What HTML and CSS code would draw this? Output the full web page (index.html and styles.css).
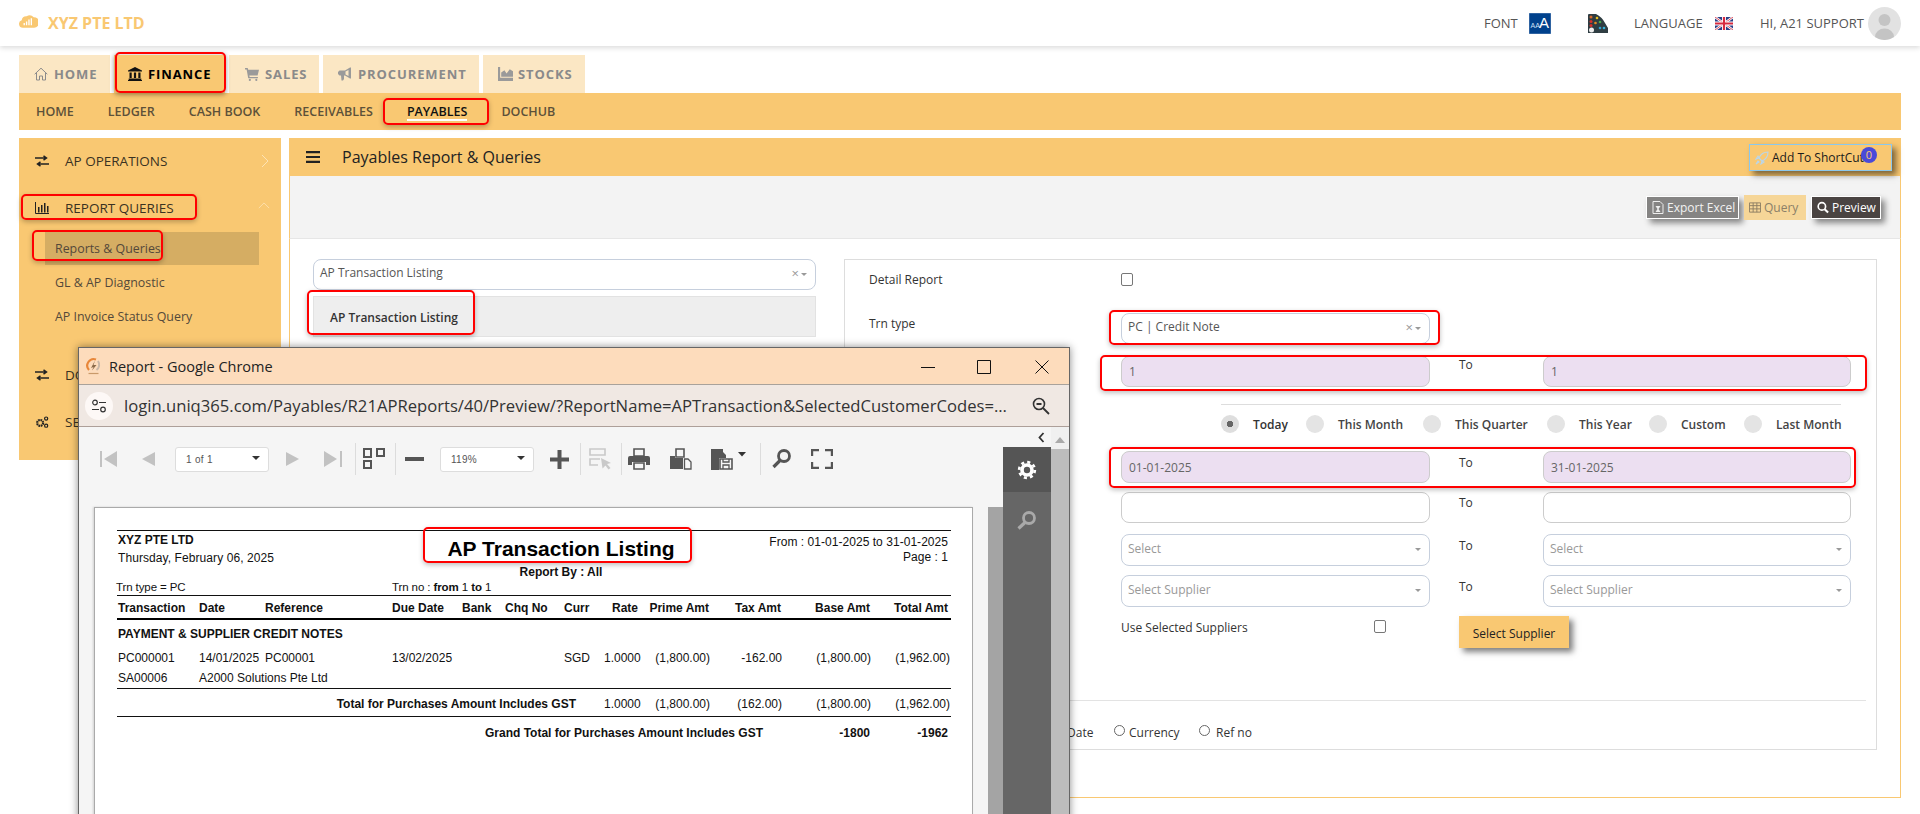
FILE: index.html
```html
<!DOCTYPE html>
<html lang="en">
<head>
<meta charset="utf-8">
<title>Payables Report &amp; Queries</title>
<link rel="stylesheet" href="styles.css">
</head>
<body>
<div class="page">
  <header class="topbar">
    <div class="brand">
      <svg class="brand-logo" viewBox="0 0 20 15"><path d="M4 15a4 4 0 0 1-1.200-7.800A5 5 0 0 1 8 3a6 6 0 0 1 7.500 1 5.500 5.500 0 0 1 .5 11z" fill="#f9c872"/><path d="M5.500 12.500V10M8 12.500V8.500M10.500 12.500V6.500M13 12.500V5" stroke="#fff" stroke-width="1.400"/></svg>
      <span>XYZ PTE LTD</span>
    </div>
    <div class="top-right">
      <span class="top-font">FONT</span>
      <svg class="font-ico" viewBox="0 0 22 21"><rect width="22" height="21" fill="#00418c" stroke="#9db6d4" stroke-width=".6"/><text x="1.500" y="15" font-size="7" fill="#cfe0f5" font-family="Liberation Sans">AA</text><text x="10" y="15" font-size="15" fill="#fff" font-family="Liberation Sans">A</text></svg>
      <svg class="palette-ico" viewBox="0 0 20 19"><path d="M0 1q0-1 1-1h7q6 3 9 9l3 5v5H0z" fill="#2f3d42"/><circle cx="3" cy="3" r="1.500" fill="#d8652a"/><circle cx="3" cy="7.500" r="1.500" fill="#d8302a"/><circle cx="3" cy="11.500" r="1.500" fill="#d8302a"/><circle cx="9" cy="4" r="1.300" fill="#e8c020"/><circle cx="12" cy="8" r="1.300" fill="#4aa84a"/><circle cx="7.500" cy="9" r="1.300" fill="#e88a20"/><circle cx="16" cy="14" r="1.300" fill="#35b0d8"/><circle cx="12" cy="14" r="1.300" fill="#2f9fd0"/><circle cx="3.500" cy="16" r="2.500" fill="#eee"/></svg>
      <span class="top-lang">LANGUAGE</span>
      <svg class="flag" viewBox="0 0 18 13"><rect width="18" height="13" rx="1" fill="#2a3f86"/><path d="M0 0l18 13M18 0L0 13" stroke="#fff" stroke-width="2.400"/><path d="M0 0l18 13M18 0L0 13" stroke="#d6293e" stroke-width=".8"/><path d="M9 0v13M0 6.500h18" stroke="#fff" stroke-width="4"/><path d="M9 0v13M0 6.500h18" stroke="#d6293e" stroke-width="2.200"/></svg>
      <span class="top-user">HI, A21 SUPPORT</span>
      <svg class="avatar" viewBox="0 0 33 33"><circle cx="16.500" cy="16.500" r="16.500" fill="#e2e2e2"/><circle cx="16.500" cy="13" r="6" fill="#c4c4c4"/><path d="M7 30a9.500 8.500 0 0 1 19 0 16.500 16.500 0 0 1-19 0z" fill="#c4c4c4"/></svg>
    </div>
  </header>

  <nav class="tabs">
    <div class="tab tab-home">
      <svg class="tab-ico" viewBox="0 0 14 14"><path d="M.7 7.200 7 1.200l6.300 6M2.500 6v7h3V9h3v4h3V6" fill="none" stroke="#8b8b8b" stroke-width="1"/></svg>HOME</div>
    <div class="tab tab-finance active">
      <svg class="tab-ico" viewBox="0 0 14 14"><path d="M7 0l7 3.500v1H0v-1zM1.500 5.500h2.200V11H1.500zM5.900 5.500h2.200V11H5.900zM10.300 5.500h2.200V11h-2.200zM.7 11.500h12.600V13H.7zM0 13h14v1H0z" fill="#111"/></svg>FINANCE</div>
    <div class="tab tab-sales">
      <svg class="tab-ico" viewBox="0 0 13 13"><path d="M0 1h2.500l.5 1.500H13l-1.300 5.500H4l.3 1.300h7.700V10.500H3L1.500 2.400H0z" fill="#9a9a9a"/><circle cx="4.500" cy="12" r="1" fill="#9a9a9a"/><circle cx="10.500" cy="12" r="1" fill="#9a9a9a"/></svg>SALES</div>
    <div class="tab tab-proc">
      <svg class="tab-ico wide" viewBox="0 0 15 13"><path d="M13 0v11h-1L7 8H6v3.500L5 13H3.500L3 8H1.500L0 6.500v-2L1.500 3H7l5-3z" fill="#9a9a9a"/><path d="M10.500 2.500 7.500 4v3l3 1.500z" fill="#fbe7c4"/></svg>PROCUREMENT</div>
    <div class="tab tab-stocks">
      <svg class="tab-ico wide" viewBox="0 0 14 13"><path d="M0 0h2v10h12v3H0zM3 9V5l3-2 2 3 3-4 3 2v5z" fill="#9a9a9a"/></svg>STOCKS</div>
  </nav>

  <nav class="subnav">
    <span>HOME</span><span>LEDGER</span><span>CASH BOOK</span><span>RECEIVABLES</span><span class="current">PAYABLES</span><span>DOCHUB</span>
  </nav>

  <div class="workspace">
    <aside class="sidebar">
      <div class="side-row"><svg class="side-ico" viewBox="0 0 14 12"><path d="M0 3h11M8.500 .8 11.500 3 8.500 5.200M14 9H3M5.500 6.800 2.500 9l3 2.200" fill="none" stroke="#222" stroke-width="1.500"/></svg><span>AP OPERATIONS</span><svg class="side-chev" viewBox="0 0 8 14"><path d="M1 1l6 6-6 6" fill="none" stroke="#fde3b4" stroke-width="1"/></svg></div>
      <div class="side-row"><svg class="side-ico" viewBox="0 0 14 12"><path d="M.5 0v11.500H14" fill="none" stroke="#222"/><path d="M3 5h1.500v5.500H3zM6 3h1.500v7.500H6zM9 1h1.500v9.500H9zM12 4h1.500v6.500H12z" fill="#222"/></svg><span>REPORT QUERIES</span><svg class="side-chev up" viewBox="0 0 14 8"><path d="M1 7l6-6 6 6" fill="none" stroke="#fde3b4" stroke-width="1"/></svg></div>
      <div class="side-sub selected">Reports &amp; Queries</div>
      <div class="side-sub">GL &amp; AP Diagnostic</div>
      <div class="side-sub tall">AP Invoice Status Query</div>
      <div class="side-row spaced"><svg class="side-ico" viewBox="0 0 14 12"><path d="M0 3h11M8.500 .8 11.500 3 8.500 5.200M14 9H3M5.500 6.800 2.500 9l3 2.200" fill="none" stroke="#222" stroke-width="1.500"/></svg><span class="cut">DO</span></div>
      <div class="side-row"><svg class="side-ico" viewBox="0 0 14 13"><circle cx="5" cy="7.500" r="3.200" fill="none" stroke="#222" stroke-width="2.400" stroke-dasharray="1.800 .7"/><circle cx="11.500" cy="2.800" r="1.700" fill="none" stroke="#222" stroke-width="1.300"/><circle cx="11.500" cy="10.500" r="1.700" fill="none" stroke="#222" stroke-width="1.300"/></svg><span class="cut">SE</span></div>
    </aside>

    <main class="panel">
      <div class="panel-head">
        <svg class="bars" viewBox="0 0 14 12"><path d="M0 0h14v2.200H0zM0 4.900h14v2.200H0zM0 9.800h14V12H0z" fill="#222"/></svg>
        <h1>Payables Report &amp; Queries</h1>
        <button class="shortcut"><svg class="rocket" viewBox="0 0 14 14"><path d="M13 1C9 1 5.500 3.500 4 7l3 3c3.500-1.500 6-5 6-9zM4 7 1 8l2-3zM7 10l-1 3 3-2zM3 10l-2 3 3-2z" fill="none" stroke="#b9d6ea" stroke-width="1.100"/></svg>Add To ShortCut<span class="badge">0</span></button>
      </div>
      <div class="panel-actions">
        <button class="act act-export"><svg class="act-ico" viewBox="0 0 11 13"><path d="M.5.5h7l3 3v9H.5z" fill="none" stroke="#eee"/><path d="M3 5h5L6 8l2 3H3l2-3z" fill="#eee"/></svg>Export Excel</button>
        <button class="act act-query"><svg class="act-ico" viewBox="0 0 13 11"><path d="M.5.500h12v10H.5zM.5 3.500h12M.5 7h12M4.500 .5v10M8.500 .5v10" fill="none" stroke="#8b7d63"/></svg>Query</button>
        <button class="act act-preview"><svg class="act-ico" viewBox="0 0 13 13"><circle cx="5.300" cy="5.300" r="4" fill="none" stroke="#fff" stroke-width="1.800"/><path d="M8.300 8.300 12 12" stroke="#fff" stroke-width="2.200"/></svg>Preview</button>
      </div>
      <div class="panel-body">
        <div class="report-pick">
          <div class="sel sel-report"><span>AP Transaction Listing</span><span class="sel-x">×</span><span class="caret"></span></div>
          <div class="pick-item">AP Transaction Listing</div>
        </div>
        <form class="filters">
          <div class="frow frow-detail"><label>Detail Report</label><span class="cb"></span></div>
          <div class="frow frow-trn"><label>Trn type</label><div class="sel"><span>PC | Credit Note</span><span class="sel-x">×</span><span class="caret"></span></div></div>
          <div class="frow frow-no"><label></label><div class="field lilac">1</div><label class="to">To</label><div class="field lilac">1</div></div>
          <div class="hr-short"></div>
          <div class="period">
            <span class="dot on"></span><b class="ptxt p-today">Today</b>
            <span class="dot"></span><span class="ptxt p-month">This Month</span>
            <span class="dot"></span><span class="ptxt p-quarter">This Quarter</span>
            <span class="dot"></span><span class="ptxt p-year">This Year</span>
            <span class="dot"></span><span class="ptxt p-custom">Custom</span>
            <span class="dot"></span><span class="ptxt p-last">Last Month</span>
          </div>
          <div class="frow frow-date"><label></label><div class="field lilac tall">01-01-2025</div><label class="to">To</label><div class="field lilac tall">31-01-2025</div></div>
          <div class="frow frow-blank"><label></label><div class="field"></div><label class="to">To</label><div class="field"></div></div>
          <div class="frow frow-sel"><label></label><div class="sel ph"><span>Select</span><span class="caret"></span></div><label class="to">To</label><div class="sel ph"><span>Select</span><span class="caret"></span></div></div>
          <div class="frow frow-sup"><label></label><div class="sel ph"><span>Select Supplier</span><span class="caret"></span></div><label class="to">To</label><div class="sel ph"><span>Select Supplier</span><span class="caret"></span></div></div>
          <div class="frow frow-use"><label></label><div class="use"><span>Use Selected Suppliers</span><span class="cb"></span></div><label class="to"></label><button type="button" class="pick-sup">Select Supplier</button></div>
          <div class="hr-full"></div>
          <div class="order">
            <span class="radio"></span><span class="o-date">Date</span>
            <span class="radio"></span><span class="o-curr">Currency</span>
            <span class="radio r-last"></span><span>Ref no</span>
          </div>
        </form>
      </div>
    </main>
  </div>

  <!-- popup report window -->
  <section class="win">
    <div class="win-title">
      <svg class="favicon" viewBox="0 0 19 19"><path d="M5 13A6.500 6.500 0 0 1 12 2.500" fill="none" stroke="#e8873a" stroke-width="2.200"/><path d="M14 4a6.500 6.500 0 0 1-1.500 9" fill="none" stroke="#c9b8a8" stroke-width="2"/><path d="M7 11 11 3.500 9.500 8h3L8 13.500 9.500 10z" fill="#8a6a4a"/><path d="M4.500 16.500h10" stroke="#c99a6a" stroke-width="1.200"/></svg>
      <span class="win-name">Report - Google Chrome</span>
      <svg class="wc wc-min" viewBox="0 0 14 14"><path d="M0 7.500h14" stroke="#111" stroke-width="1"/></svg>
      <svg class="wc wc-max" viewBox="0 0 14 14"><path d="M.5.500h13v13H.5z" fill="none" stroke="#111"/></svg>
      <svg class="wc wc-close" viewBox="0 0 14 14"><path d="M.5.500l13 13M13.500 .5l-13 13" stroke="#111"/></svg>
    </div>
    <div class="win-addr">
      <span class="addr-badge"><svg viewBox="0 0 16 14"><circle cx="4" cy="3.500" r="2.300" fill="none" stroke="#333" stroke-width="1.200"/><path d="M8 3.500h7M1 10.500h7" stroke="#333" stroke-width="1.200"/><circle cx="12" cy="10.500" r="2.300" fill="none" stroke="#333" stroke-width="1.200"/></svg></span>
      <span class="addr-url">login.uniq365.com/Payables/R21APReports/40/Preview/?ReportName=APTransaction&amp;SelectedCustomerCodes=...</span>
      <svg class="addr-zoom" viewBox="0 0 18 18"><circle cx="7" cy="7" r="5.500" fill="none" stroke="#333" stroke-width="1.600"/><path d="M4.500 7h5M11 11l6 6" stroke="#333" stroke-width="1.800"/></svg>
    </div>
    <div class="win-body">
      <div class="viewer">
        <div class="toolbar">
          <svg class="t t-first" viewBox="0 0 17 16"><path d="M1 0v16" stroke="#c2c2c2" stroke-width="2"/><path d="M17 0v16L4 8z" fill="#c2c2c2"/></svg>
          <svg class="t t-prev" viewBox="0 0 13 14"><path d="M13 0v14L0 7z" fill="#c2c2c2"/></svg>
          <div class="dd t-pager"><span>1 of 1</span><i></i></div>
          <svg class="t t-next" viewBox="0 0 13 14"><path d="M0 0v14l13-7z" fill="#c2c2c2"/></svg>
          <svg class="t t-last" viewBox="0 0 18 16"><path d="M17 0v16" stroke="#c2c2c2" stroke-width="2"/><path d="M0 0v16l13-8z" fill="#c2c2c2"/></svg>
          <span class="tsep ts1"></span>
          <svg class="t t-layout" viewBox="0 0 22 21"><path d="M1 1h7v8H1zM14 1h7v7h-7zM1 13h7v7H1z" fill="none" stroke="#555" stroke-width="2"/></svg>
          <span class="tsep ts2"></span>
          <svg class="t t-minus" viewBox="0 0 19 6"><path d="M0 0h19v4H0z" fill="#555"/></svg>
          <div class="dd t-zoom"><span>119%</span><i></i></div>
          <svg class="t t-plus" viewBox="0 0 19 19"><path d="M7.500 0h4v7.500H19v4h-7.500V19h-4v-7.500H0v-4h7.500z" fill="#555"/></svg>
          <span class="tsep ts3"></span>
          <svg class="t t-sel" viewBox="0 0 23 22"><path d="M1 1h15v6H1zM11 11H1v6h8" fill="none" stroke="#c9c9c9" stroke-width="1.600"/><path d="M12 10l10 5-4 1 3.500 4-2 1.500-3-4-3 3z" fill="#c9c9c9"/></svg>
          <span class="tsep ts4"></span>
          <svg class="t t-print" viewBox="0 0 22 22"><path d="M6 1h10v7H6z" fill="none" stroke="#555" stroke-width="1.600"/><path d="M2 8h18q2 0 2 2v7h-4v-3H4v3H0v-7q0-2 2-2z" fill="#555"/><path d="M6 15h10v6H6z" fill="none" stroke="#555" stroke-width="1.600"/></svg>
          <svg class="t t-export" viewBox="0 0 22 22"><path d="M6 1h8v8H6z" fill="none" stroke="#555" stroke-width="1.600"/><path d="M0 8h5v2h8v11H0z" fill="#555"/><path d="M14.500 11H18l3 3v7h-6.500z" fill="#f5f5f5" stroke="#555" stroke-width="1.300"/></svg>
          <svg class="t t-save" viewBox="0 0 35 22"><path d="M0 1h12v3l3 3v3H8v12H0z" fill="#555"/><path d="M9 11h12v10H9z" fill="#f5f5f5" stroke="#555" stroke-width="1.600"/><path d="M12 11v3h6v-3M12 21v-4h6v4" fill="none" stroke="#555" stroke-width="1.300"/><path d="M27 4h8l-4 4.500z" fill="#333"/></svg>
          <span class="tsep ts5"></span>
          <svg class="t t-search" viewBox="0 0 19 20"><circle cx="12" cy="7" r="5.500" fill="none" stroke="#555" stroke-width="2.800"/><path d="M8 11.500 1.500 18" stroke="#555" stroke-width="3.200"/></svg>
          <svg class="t t-full" viewBox="0 0 22 20"><path d="M1 7V1h7M14 1h7v6M21 13v6h-7M8 19H1v-6" fill="none" stroke="#555" stroke-width="2.400"/></svg>
        </div>
        <div class="canvas">
          <article class="sheet">
            <div class="rule thin"></div>
            <div class="rep-head">
              <div class="rh-left"><b>XYZ PTE LTD</b><span>Thursday, February 06, 2025</span></div>
              <div class="rh-mid"><strong>AP Transaction Listing</strong><b>Report By : All</b></div>
              <div class="rh-right"><span>From : 01-01-2025 to 31-01-2025</span><span>Page : 1</span></div>
            </div>
            <div class="rep-crit"><span class="crit1">Trn type = PC</span><span>Trn no : <b>from</b> 1 <b>to</b> 1</span></div>
            <div class="rule thin"></div>
            <div class="rrow rhead">
              <span>Transaction</span><span>Date</span><span>Reference</span><span>Due Date</span><span>Bank</span><span>Chq No</span><span>Curr</span><span class="n">Rate</span><span class="n">Prime Amt</span><span class="n">Tax Amt</span><span class="n">Base Amt</span><span class="n">Total Amt</span>
            </div>
            <div class="rule thick"></div>
            <div class="rsection">PAYMENT &amp; SUPPLIER CREDIT NOTES</div>
            <div class="rrow rdata">
              <span>PC000001</span><span>14/01/2025</span><span>PC00001</span><span>13/02/2025</span><span></span><span></span><span>SGD</span><span class="n">1.0000</span><span class="n">(1,800.00)</span><span class="n">-162.00</span><span class="n">(1,800.00)</span><span class="n">(1,962.00)</span>
            </div>
            <div class="rrow rdata2"><span>SA00006</span><span class="wide-cell">A2000 Solutions Pte Ltd</span></div>
            <div class="rule thin"></div>
            <div class="rrow rtotal">
              <b class="total-label">Total for Purchases Amount Includes GST</b><span class="n">1.0000</span><span class="n">(1,800.00)</span><span class="n">(162.00)</span><span class="n">(1,800.00)</span><span class="n">(1,962.00)</span>
            </div>
            <div class="rule thin"></div>
            <div class="rrow rgrand">
              <b class="grand-label">Grand Total for Purchases Amount Includes GST</b><b class="n g-base">-1800</b><b class="n g-total">-1962</b>
            </div>
          </article>
          <div class="canvas-scroll"></div>
        </div>
      </div>
      <div class="side-panel">
        <div class="sp-top"><svg viewBox="0 0 7 11"><path d="M5.500 1 1.500 5.500l4 4.500" fill="none" stroke="#333" stroke-width="1.800"/></svg></div>
        <div class="sp-gear"><svg viewBox="0 0 22 22"><circle cx="11" cy="11" r="5.500" fill="none" stroke="#fff" stroke-width="4"/><circle cx="11" cy="11" r="8.600" fill="none" stroke="#fff" stroke-width="3" stroke-dasharray="3.400 3.350"/></svg></div>
        <div class="sp-search"><svg viewBox="0 0 19 19"><circle cx="12" cy="7" r="5.500" fill="none" stroke="#a9a9a9" stroke-width="2.800"/><path d="M8 11.500 1.500 17.500" stroke="#a9a9a9" stroke-width="3.200"/></svg></div>
      </div>
      <div class="win-scroll"><svg viewBox="0 0 10 6"><path d="M5 0l5 6H0z" fill="#aaa"/></svg><div class="thumb"></div></div>
    </div>
  </section>

  <!-- red annotation boxes -->
  <span class="mark m-finance"></span>
  <span class="mark m-payables"></span>
  <span class="mark m-report"></span>
  <span class="mark m-reports"></span>
  <span class="mark m-listing"></span>
  <span class="mark m-trn"></span>
  <span class="mark m-no"></span>
  <span class="mark m-date"></span>
  <span class="mark m-title"></span>
</div>
</body>
</html>
```

FILE: styles.css
```css
* { box-sizing: border-box; }
html, body { margin: 0; padding: 0; }
body { font-family: "Open Sans", "Noto Sans", sans-serif; background: #fff; color: #333; }
.page { position: relative; width: 1920px; height: 814px; overflow: hidden; background: #fff; }
button { font-family: inherit; }

/* top bar */
.topbar { height: 46px; display: flex; align-items: center; justify-content: space-between; padding: 0 19px; background: #fff; box-shadow: 0 2px 5px rgba(0,0,0,.14); }
.brand { display: flex; align-items: center; gap: 10px; color: #f9c872; font-weight: 700; font-size: 16px; }
.brand-logo { width: 19px; height: 15px; margin-top: -5px; }
.top-right { display: flex; align-items: center; font-size: 13px; color: #555; }
.top-font { width: 45px; }
.font-ico { width: 22px; height: 21px; margin-right: 37px; }
.palette-ico { width: 20px; height: 19px; margin-right: 26px; }
.top-lang { width: 81px; }
.flag { width: 18px; height: 13px; margin-right: 27px; }
.top-user { width: 108px; }
.avatar { width: 33px; height: 33px; }

/* tabs */
.tabs { display: flex; gap: 4px; margin: 9px 0 0 19px; height: 38px; }
.tab { display: flex; align-items: center; background: #fbe7c4; color: #8a8a8a; font-weight: 700; font-size: 13px; letter-spacing: .9px; }
.tab-ico { width: 14px; height: 14px; margin-right: 6px; }
.tab-ico.wide { width: 15px; margin-right: 5px; }
.tab-home { width: 91px; padding-left: 15px; }
.tab-finance { width: 111px; padding-left: 14px; }
.tab-sales { width: 90px; padding-left: 16px; }
.tab-proc { width: 156px; padding-left: 15px; }
.tab-stocks { width: 102px; padding-left: 15px; }
.tab.active { background: #f9c872; color: #000; box-shadow: 0 0 5px rgba(0,0,0,.25); }

/* sub nav */
.subnav { display: flex; align-items: center; gap: 34px; height: 37px; margin: 0 19px; padding-left: 17px; background: #f9c872; font-size: 12.500px; font-weight: 600; color: #5d5139; }
.subnav .current { color: #111; border-bottom: 2px solid #fff; line-height: 15px; margin-top: 2px; }

/* workspace */
.workspace { display: flex; gap: 8px; margin: 8px 19px 0; }
.sidebar { width: 262px; height: 322px; background: #f9c872; flex: none; }
.side-row { display: flex; align-items: center; height: 46px; padding-left: 16px; font-size: 13.500px; color: #3a3222; position: relative; }
.side-row + .side-row { margin-top: 1px; }
.side-ico { width: 14px; height: 12px; margin-right: 16px; flex: none; }
.side-chev { position: absolute; right: 12px; width: 8px; height: 14px; }
.side-chev.up { width: 12px; height: 7px; right: 11px; top: 17px; }
.side-sub { height: 34px; line-height: 36px; margin-left: 26px; padding-left: 10px; width: 214px; font-size: 12.400px; color: #54483a; }
.side-sub.selected { height: 33px; line-height: 34px; background: #d5ad63; margin-top: 1px; }
.side-sub.tall { height: 36px; }
.side-row.spaced { margin-top: 17px; }

/* main panel */
.panel { flex: 1; min-width: 0; height: 660px; display: flex; flex-direction: column; }
.panel-head { height: 38px; background: #f9c872; display: flex; align-items: center; padding-left: 17px; position: relative; }
.bars { width: 14px; height: 12px; margin-top: -1px; }
.panel-head h1 { margin: 0 0 0 22px; font-size: 16px; font-weight: 400; color: #222; }
.shortcut { position: absolute; right: 9px; top: 6px; width: 143px; height: 27px; padding: 0 0 0 5px; background: #f9c872; border: 1px solid #8ac8ee; font-size: 12px; color: #1b1b1b; display: flex; align-items: center; box-shadow: 4px 4px 6px rgba(0,0,0,.5); white-space: nowrap; }
.rocket { width: 14px; height: 14px; margin-right: 3px; }
.badge { position: absolute; right: 14px; top: 2px; width: 16px; height: 16px; border-radius: 50%; background: #4a4ad8; color: #f9c872; font-size: 11px; line-height: 16px; text-align: center; }
.panel-actions { height: 63px; flex: none; display: flex; justify-content: flex-end; align-items: flex-start; gap: 5px; padding: 19px 19px 0 0; background: #f3f3f3; border-left: 1px solid #f9c872; border-right: 1px solid #f9c872; border-bottom: 1px solid #e6e6e6; }
.act { height: 23px; display: flex; align-items: center; padding: 0 4px 0 5px; border: 1px solid #fff; font-size: 12px; box-shadow: 4px 4px 6px rgba(0,0,0,.45); margin-top: 1px; white-space: nowrap; overflow: hidden; }
.act-ico { width: 12px; height: 13px; margin-right: 3px; flex: none; }
.act-export { width: 93px; background: #858483; color: #f2f2f2; font-size: 12px; }
.act-query { width: 62px; height: 25px; margin-top: 0; background: #f6d698; color: #8b8068; border: 0; box-shadow: none; }
.act-preview { width: 70px; background: #4a4442; color: #fff; }
.panel-body { flex: 1; display: flex; padding: 20px 23px 0 23px; gap: 28px; border: 1px solid #f9c872; border-top: 0; }

/* report picker */
.report-pick { width: 503px; flex: none; }
.pick-item { height: 41px; margin-top: 6px; padding-left: 16px; line-height: 41px; background: #eee; border: 1px solid #e2e2e2; font-size: 12px; font-weight: 600; color: #333; }

/* selects + fields */
.sel { display: flex; align-items: center; height: 31px; border: 1px solid #c6cfdd; border-radius: 8px; padding: 0 8px 4px 6px; background: #fff; font-size: 12px; color: #555; }
.sel > span:first-child { flex: 1; }
.sel-x { color: #999; font-size: 13px; margin-right: 2px; }
.caret { width: 0; height: 0; border: 3px solid transparent; border-top: 3px solid #999; border-bottom: 0; margin-top: 3px; }
.sel.ph { color: #999; height: 32px; }
.field { height: 31px; border: 1px solid #ccc; border-radius: 8px; padding: 0 7px; line-height: 29px; font-size: 12px; color: #666; background: #fff; }
.field.lilac { background: #ecdff1; }
.field.tall { height: 32px; line-height: 31px; }

/* filter form */
.filters { width: 1033px; height: 491px; flex: none; border: 1px solid #ddd; padding: 0 0 0 24px; }
.frow { display: grid; grid-template-columns: 252px 309px 113px 308px; align-items: start; }
.frow label { font-size: 12px; line-height: 18px; color: #333; display: block; }
.frow .to { padding: 0 0 0 29px; }
.frow-detail { height: 18px; margin-top: 10px; }
.frow-detail label { margin-top: 1px; }
.frow-trn { margin-top: 25px; }
.frow-trn label { margin-top: 2px; }
.frow-no { margin-top: 12px; }
.hr-short { height: 1px; background: #ddd; margin: 17px 0 0 352px; width: 620px; }
.period { display: flex; align-items: center; height: 18px; margin: 10px 0 0 352px; font-size: 12px; color: #444; }
.ptxt { font-weight: 600; white-space: nowrap; font-size: 12px; }
.p-today { width: 53px; color: #333; }
.p-month { width: 85px; }
.p-quarter { width: 92px; }
.p-year { width: 70px; }
.p-custom { width: 63px; }
.dot { width: 18px; height: 18px; border-radius: 50%; background: #e4e4e4; flex: none; margin-right: 14px; }
.dot.on { background: radial-gradient(circle, #666 0 3px, #dedede 3.500px); }
.frow-date { margin-top: 18px; }
.frow-date .to { margin-top: 3px; }
.frow-blank { margin-top: 9px; }
.frow-blank .to { margin-top: 2px; }
.frow-sel { margin-top: 11px; }
.frow-sel .to { margin-top: 3px; }
.frow-sup { margin-top: 9px; }
.frow-sup .to { margin-top: 3px; }
.frow-use { margin-top: 9px; }
.use { display: flex; justify-content: space-between; font-size: 12px; padding: 3px 44px 0 0; color: #333; }
.cb { display: block; width: 12px; height: 13px; border: 1px solid #777; border-radius: 2px; background: #fff; margin-top: 1px; }
.frow-detail .cb { margin-top: 3px; }
.pick-sup { width: 110px; height: 32px; border: 0; background: #f9c872; color: #222; font-size: 12px; box-shadow: 4px 4px 6px rgba(0,0,0,.5); padding: 3px 0 0; justify-self: start; margin-left: -84px; }
.hr-full { height: 1px; background: #e3e3e3; margin: 52px 10px 0 -12px; }
.order { display: flex; align-items: center; margin: 22px 0 0 0; padding-left: 183px; font-size: 12px; color: #333; height: 18px; }
.radio { width: 11px; height: 11px; border: 1px solid #666; border-radius: 50%; background: #fff; margin-right: 4px; margin-top: -3px; flex: none; }
.radio.r-last { margin-right: 6px; }
.o-date { width: 47px; }
.o-curr { width: 70px; }

/* popup window */
.win { position: absolute; left: 78px; top: 347px; width: 992px; height: 480px; background: #f5f5f5; border: 1px solid #666; box-shadow: 0 0 8px rgba(0,0,0,.45); display: flex; flex-direction: column; }
.win-title { height: 37px; flex: none; background: #fddcbc; border-bottom: 1px solid #a9a29b; display: flex; align-items: center; padding-left: 5px; font-family: "Open Sans", sans-serif; }
.favicon { width: 19px; height: 19px; margin-right: 6px; }
.win-name { font-size: 14.500px; color: #222; width: 812px; }
.wc { width: 14px; height: 14px; flex: none; margin-top: 1px; }
.wc-min { margin-right: 42px; }
.wc-max { margin-right: 44px; }
.win-addr { height: 42px; flex: none; background: #f0e8e3; border-bottom: 1px solid #ad9f99; display: flex; align-items: center; padding-left: 6px; }
.addr-badge { width: 28px; height: 28px; border-radius: 50%; background: #fdf8f6; display: flex; align-items: center; justify-content: center; flex: none; margin-right: 11px; }
.addr-badge svg { width: 16px; height: 14px; }
.addr-url { font-size: 16.640px; line-height: 24px; color: #333; white-space: nowrap; width: 884px; margin-right: 24px; overflow: hidden; flex: none; }
.addr-zoom { width: 18px; height: 18px; }
.win-body { flex: 1; display: flex; min-height: 0; }
.viewer { width: 924px; flex: none; display: flex; flex-direction: column; }
.toolbar { height: 64px; flex: none; display: flex; align-items: center; padding-left: 21px; background: #f5f5f5; margin-bottom: 16px; }
.t { flex: none; }
.t-first { width: 17px; height: 16px; }
.t-prev { width: 13px; height: 14px; margin-left: 25px; }
.dd { width: 94px; height: 25px; background: #fff; border: 1px solid #ddd; border-radius: 3px; display: flex; align-items: center; justify-content: space-between; padding: 0 10px; font-size: 10px; color: #555; flex: none; font-family: "Liberation Sans", sans-serif; letter-spacing: .3px; }
.dd i { width: 0; height: 0; border: 4px solid transparent; border-top: 4px solid #333; border-bottom: 0; margin: -3px -2px 0 0; }
.t-pager { margin-left: 20px; }
.t-next { width: 13px; height: 14px; margin-left: 17px; }
.t-last { width: 18px; height: 16px; margin-left: 25px; }
.tsep { width: 1px; height: 32px; background: #dcdcdc; flex: none; }
.ts1 { margin-left: 13px; }
.t-layout { width: 22px; height: 21px; margin-left: 7px; margin-top: -2px; }
.ts2 { margin-left: 10px; }
.t-minus { width: 19px; height: 6px; margin-left: 9px; margin-top: 2px; }
.t-zoom { margin-left: 16px; }
.t-plus { width: 19px; height: 19px; margin-left: 16px; }
.ts3 { margin-left: 11px; }
.t-sel { width: 23px; height: 22px; margin-left: 8px; }
.ts4 { margin-left: 9px; }
.t-print { width: 22px; height: 22px; margin-left: 6px; }
.t-export { width: 22px; height: 22px; margin-left: 20px; }
.t-save { width: 35px; height: 22px; margin-left: 19px; }
.ts5 { margin-left: 14px; }
.t-search { width: 19px; height: 20px; margin-left: 11px; }
.t-full { width: 22px; height: 20px; margin-left: 20px; }
.canvas { flex: 1; display: flex; min-height: 0; padding-left: 15px; background: #f5f5f5; }
.canvas-scroll { width: 15px; margin-left: 15px; background: #a4a4a4; flex: none; }
.sheet { width: 879px; height: 320px; flex: none; background: #fff; border: 1px solid #aaa; padding: 22px 0 0 22px; font-family: "Liberation Sans", Arial, sans-serif; font-size: 12px; color: #111; box-shadow: -1px 0 2px rgba(0,0,0,.15); }
.sheet > * { width: 834px; }
.rule { background: #111; }
.rule.thin { height: 1px; }
.rule.thick { height: 2px; background: #000; }
.rep-head { height: 48px; display: grid; grid-template-columns: 300px 288px 246px; }
.rep-head > div { display: flex; flex-direction: column; }
.rh-left { padding: 2px 0 0 1px; }
.rh-left b { line-height: 15px; font-size: 12px; }
.rh-left span { line-height: 21px; letter-spacing: .08px; }
.rh-mid { align-items: center; }
.rh-mid strong { font-size: 21px; line-height: 35px; color: #000; }
.rh-mid b { font-size: 12px; line-height: 12px; font-weight: 700; }
.rh-right { align-items: flex-end; padding: 4px 3px 0 0; }
.rh-right span { line-height: 15px; letter-spacing: .04px; }
.rep-crit { height: 16px; line-height: 16px; display: grid; grid-template-columns: 275px 1fr; font-size: 11.500px; letter-spacing: -.1px; }
.crit1 { margin-left: -1px; }
.rrow { display: grid; grid-template-columns: 81px 66px 127px 70px 43px 59px 40px 35px 71px 72px 89px 79px; padding-left: 1px; white-space: nowrap; }
.rrow .n { text-align: right; }
.rhead { height: 22px; line-height: 24px; font-weight: 700; }
.rhead .n { padding-right: 1px; }
.rhead .n:last-child { padding-right: 2px; }
.rsection { height: 29px; line-height: 29px; padding-left: 1px; font-weight: 700; }
.rdata { height: 19px; line-height: 18px; }
.rdata2 { height: 20px; line-height: 21px; }
.wide-cell { grid-column: 2 / 5; }
.rtotal { height: 27px; line-height: 30px; }
.total-label { grid-column: 1 / 8; text-align: right; margin-right: 28px; }
.rgrand { height: 33px; line-height: 32px; }
.grand-label { grid-column: 1 / 11; text-align: right; margin-right: 19px; }
.g-base { grid-column: 11; padding-right: 1px; }
.g-total { grid-column: 12; padding-right: 2px; }
.side-panel { width: 48px; flex: none; display: flex; flex-direction: column; }
.sp-top { height: 20px; background: #f5f5f5; display: flex; justify-content: flex-end; align-items: center; padding-right: 6px; }
.sp-top svg { width: 7px; height: 11px; }
.sp-gear { height: 45px; background: #555; display: flex; align-items: center; justify-content: center; }
.sp-gear svg { width: 20px; height: 20px; }
.sp-search { flex: 1; background: #666; padding: 19px 0 0 14px; }
.sp-search svg { width: 19px; height: 19px; display: block; }
.win-scroll { width: 18px; flex: none; background: #f0f0f0; }
.win-scroll svg { display: block; width: 10px; height: 6px; margin: 10px auto 0; }
.thumb { height: 400px; margin-top: 6px; background: #bdbdbd; }

/* red annotation boxes */
.mark { position: absolute; border: 2px solid #f00; border-radius: 5px; box-shadow: 0 2px 5px rgba(0,0,0,.25); }
.m-finance { left: 115px; top: 52px; width: 111px; height: 41px; }
.m-payables { left: 383px; top: 98px; width: 106px; height: 27px; }
.m-report { left: 21px; top: 194px; width: 176px; height: 26px; }
.m-reports { left: 32px; top: 230px; width: 131px; height: 31px; }
.m-listing { left: 307px; top: 290px; width: 168px; height: 45px; }
.m-trn { left: 1109px; top: 310px; width: 331px; height: 35px; }
.m-no { left: 1100px; top: 355px; width: 767px; height: 36px; }
.m-date { left: 1109px; top: 447px; width: 747px; height: 41px; }
.m-title { left: 423px; top: 527px; width: 269px; height: 36px; }
```
